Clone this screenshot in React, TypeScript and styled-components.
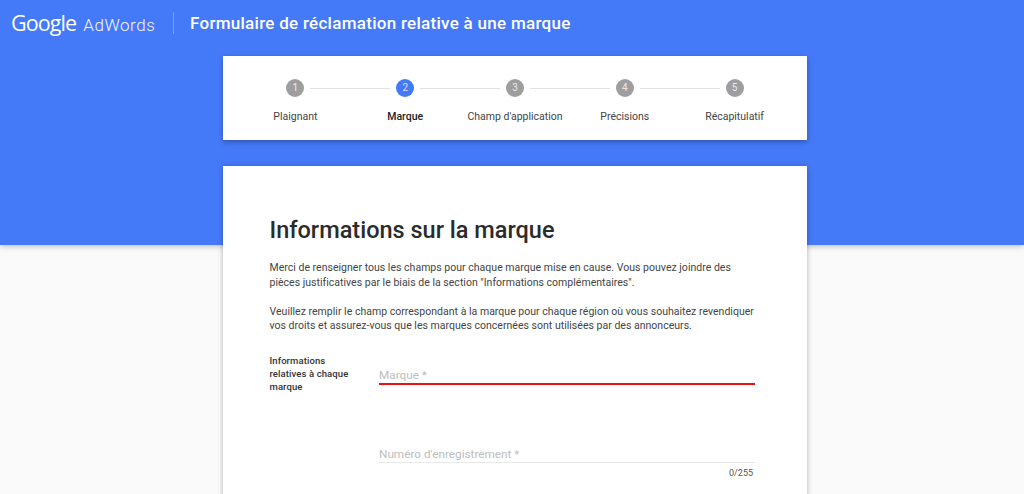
import React from "react";
import styled, { createGlobalStyle } from "styled-components";

const Global = createGlobalStyle`
  html, body { margin: 0; padding: 0; background: #fafafa; }
  body { font-family: Roboto, "Liberation Sans", sans-serif; color: #333; height: 494px; overflow: hidden; }
`;
const Page = styled.div`height: 494px; overflow: hidden; background: #fafafa;`;
const Hero = styled.header`
  height: 245px; background: #4479f8; box-shadow: 0 1px 6px rgba(0,0,0,.28);
  display: flex; flex-direction: column;
`;
const TopBar = styled.div`display: flex; align-items: center; height: 46px; padding-left: 11px; color: #fff;`;
const Brand = styled.div`display: flex; align-items: baseline; width: 162px; border-right: 1px solid rgba(255,255,255,.3); height: 22px; line-height: 22px;`;
const Google = styled.span`font-family: "Open Sans", sans-serif; font-size: 21.5px; letter-spacing: -.9px; margin-right: 7px;`;
const AdWords = styled.span`font-size: 17px; font-weight: 300; letter-spacing: .55px; opacity: .95;`;
const Title = styled.h1`margin: 0 0 0 16px; font-size: 17px; font-weight: 500; letter-spacing: .28px;`;
const Stepper = styled.ol`
  list-style: none; box-sizing: border-box; width: 584px; height: 84px; margin: 10px 0 0 223px; padding: 23px 17.5px 0;
  background: #fff; box-shadow: 0 2px 5px rgba(0,0,0,.3); display: grid; grid-template-columns: repeat(5, 1fr);
`;
const Step = styled.li<{ $last?: boolean }>`
  position: relative; display: flex; flex-direction: column; align-items: center;
  ${p => !p.$last && `&::after { content: ""; position: absolute; top: 9px; left: calc(50% + 15px); width: 80px; height: 1px; background: #e2e2e2; }`}
`;
const Dot = styled.span<{ $active?: boolean }>`
  width: 18px; height: 18px; border-radius: 50%; background: ${p => p.$active ? "#4479f8" : "#9e9e9e"};
  color: rgba(255,255,255,.8); font-size: 10px; line-height: 18px; text-align: center;
`;
const StepLabel = styled.span<{ $active?: boolean }>`
  margin-top: 13px; font-size: 10.5px; line-height: 14px; white-space: nowrap;
  color: ${p => p.$active ? "#222" : "#444"}; font-weight: ${p => p.$active ? 500 : 400};
`;
const FormCard = styled.main`
  position: relative; box-sizing: border-box; width: 584px; height: 400px; margin: -79px 0 0 223px; padding: 49px 52px 0 46.5px;
  background: #fff; box-shadow: 0 1px 5px rgba(0,0,0,.3);
`;
const Heading = styled.h2`margin: 0 0 16px; font-size: 23.5px; line-height: 30px; font-weight: 500; color: #2b2b2b;`;
const Para = styled.p`margin: 0 0 14.5px; font-size: 10.5px; line-height: 14.5px; color: #444; letter-spacing: .02px;`;
const Row = styled.div`display: grid; grid-template-columns: 109.5px 1fr; margin-top: 20px;`;
const RowLabel = styled.div`font-size: 9.5px; line-height: 13.3px; font-weight: 500; color: #333; width: 90px; letter-spacing: .1px;`;
const Fields = styled.div`display: flex; flex-direction: column;`;
const Field = styled.div<{ $error?: boolean }>`
  height: 16px; padding-top: 2px; margin-top: ${p => p.$error ? "11px" : "59px"}; font-size: 11.75px; line-height: 16px; color: #bdbdbd;
  border-bottom: ${p => p.$error ? "2px solid #ee1111" : "1px solid #e8e8e8"}; box-sizing: content-box;
`;
const Counter = styled.div`margin-top: 4px; padding-right: 2px; text-align: right; font-size: 9px; line-height: 12px; color: #555;`;

const steps = ["Plaignant", "Marque", "Champ d'application", "Précisions", "Récapitulatif"];

export default function App() {
  return (
    <Page>
      <Global />
      <Hero>
        <TopBar>
          <Brand><Google>Google</Google><AdWords>AdWords</AdWords></Brand>
          <Title>Formulaire de réclamation relative à une marque</Title>
        </TopBar>
        <Stepper>
          {steps.map((s, i) => (
            <Step key={s} $last={i === 4}>
              <Dot $active={i === 1}>{i + 1}</Dot>
              <StepLabel $active={i === 1}>{s}</StepLabel>
            </Step>
          ))}
        </Stepper>
      </Hero>
      <FormCard>
        <Heading>Informations sur la marque</Heading>
        <Para>Merci de renseigner tous les champs pour chaque marque mise en cause. Vous pouvez joindre des pièces justificatives par le biais de la section "Informations complémentaires".</Para>
        <Para>Veuillez remplir le champ correspondant à la marque pour chaque région où vous souhaitez revendiquer vos droits et assurez-vous que les marques concernées sont utilisées par des annonceurs.</Para>
        <Row>
          <RowLabel>Informations relatives à chaque marque</RowLabel>
          <Fields>
            <Field $error>Marque *</Field>
            <Field>Numéro d'enregistrement *</Field>
            <Counter>0/255</Counter>
          </Fields>
        </Row>
      </FormCard>
    </Page>
  );
}
